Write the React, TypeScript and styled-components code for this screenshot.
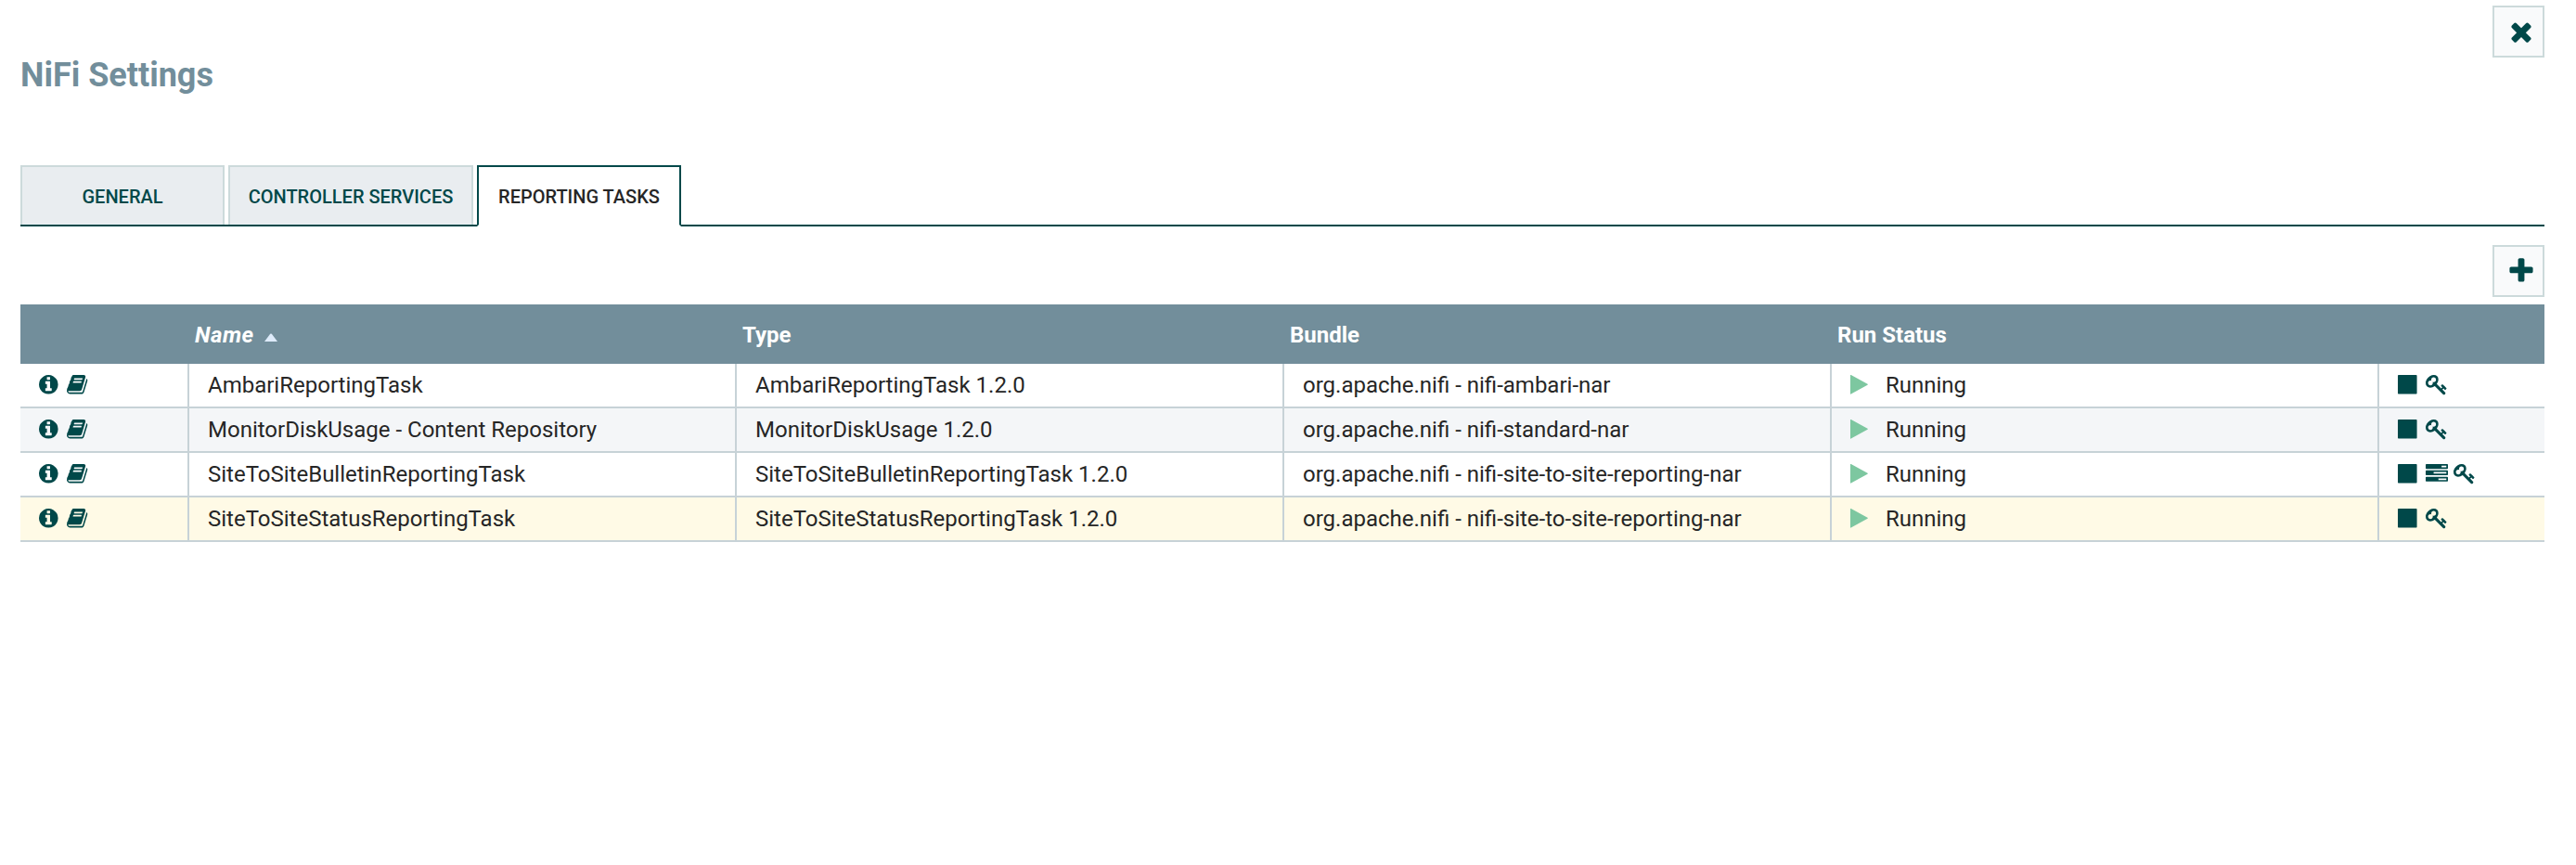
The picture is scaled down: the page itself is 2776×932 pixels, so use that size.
import React from "react";
import styled, { createGlobalStyle } from "styled-components";

const GlobalStyle = createGlobalStyle`
  body { margin: 0; background: #fff; font-family: Roboto, "Liberation Sans", sans-serif; color: #262626; }
  * { box-sizing: border-box; }
`;

const TEAL = "#004849";
const columns = "182px repeat(4, 590px) 178px";

const Page = styled.main`
  height: 932px;
  padding: 6px 34px 0 22px;
  display: flex;
  flex-direction: column;
`;

const TopBar = styled.header`
  display: flex;
  justify-content: space-between;
  height: 172px;
`;

const Title = styled.h1`
  margin: 53px 0 0;
  font-size: 36px;
  line-height: 44px;
  font-weight: 700;
  color: #728e9b;
`;

const IconButton = styled.button`
  width: 56px;
  height: 56px;
  padding: 0 0 0 5px;
  display: flex;
  align-items: center;
  justify-content: center;
  border: 2px solid #ccdadb;
  background: #f9fafb;
  color: ${TEAL};
`;

const Tabs = styled.nav`
  display: flex;
  gap: 4px;
  height: 66px;
  border-bottom: 2px solid ${TEAL};
`;

const Tab = styled.div<{ $width: number; $active?: boolean }>`
  width: ${(p) => p.$width}px;
  height: ${(p) => (p.$active ? 66 : 64)}px;
  padding-top: 20px;
  text-align: center;
  font-size: 20px;
  line-height: 24px;
  font-weight: 500;
  white-space: nowrap;
  border: 2px solid ${(p) => (p.$active ? TEAL : "#ccdadb")};
  border-bottom: ${(p) => (p.$active ? "2px solid #fff" : "0")};
  background: ${(p) => (p.$active ? "#fff" : "#e9edf0")};
  color: ${(p) => (p.$active ? "#262626" : TEAL)};
`;

const Actions = styled.div`
  display: flex;
  justify-content: flex-end;
  padding: 20px 0 8px;
`;

const HeaderRow = styled.div`
  display: grid;
  grid-template-columns: ${columns};
  height: 64px;
  background: #728e9b;
  color: #fff;
`;

const HeaderCell = styled.div<{ $sorted?: boolean }>`
  display: flex;
  align-items: center;
  gap: 11px;
  padding: 2px 0 0 6px;
  font-size: 24px;
  font-weight: 700;
  font-style: ${(p) => (p.$sorted ? "italic" : "normal")};
  letter-spacing: ${(p) => (p.$sorted ? "0.5px" : "normal")};
`;

const SortArrow = styled.svg`
  width: 14px;
  height: 9px;
  margin-top: 4px;
`;

const Row = styled.div<{ $tone: string }>`
  display: grid;
  grid-template-columns: ${columns};
  height: 48px;
  border-bottom: 2px solid #c7d2d7;
  background: ${(p) => p.$tone};
`;

const Cell = styled.div`
  padding-left: 20px;
  font-size: 24px;
  line-height: 46px;
  white-space: nowrap;
  &:not(:last-child) { border-right: 2px solid #c7d2d7; }
`;

const IconCell = styled(Cell)`
  display: flex;
  padding-top: 12px;
  line-height: 24px;
  color: ${TEAL};
`;

const StatusCell = styled(Cell)`
  display: flex;
`;

const IconSlot = styled.span<{ $width?: number }>`
  display: flex;
  width: ${(p) => p.$width ?? 30}px;
`;

const StatusIcon = styled(IconSlot)`
  padding-top: 12px;
  color: #7dc7a0;
`;

const Glyph = styled.svg`
  display: block;
  flex: none;
  fill: currentColor;
  overflow: visible;
`;

type Shape = { x: number; y?: number; d: string };

const shapes: Record<string, Shape> = {
  times: {
    x: 0, y: 0,
    d: "M1490 1322q0 40-28 68l-136 136q-28 28-68 28t-68-28l-294-294-294 294q-28 28-68 28t-68-28l-136-136q-28-28-28-68t28-68l294-294-294-294q-28-28-28-68t28-68l136-136q28-28 68-28t68 28l294 294 294-294q28-28 68-28t68 28l136 136q28 28 28 68t-28 68l-294 294 294 294q28 28 28 68z",
  },
  plus: {
    x: 0, y: 0,
    d: "M1600 736v192q0 40-28 68t-68 28h-416v416q0 40-28 68t-68 28h-192q-40 0-68-28t-28-68v-416h-416q-40 0-68-28t-28-68v-192q0-40 28-68t68-28h416v-416q0-40 28-68t68-28h192q40 0 68 28t28 68v416h416q40 0 68 28t28 68z",
  },
  info: {
    x: 128,
    d: "M1152 1376v-160q0-14-9-23t-23-9h-96v-512q0-14-9-23t-23-9h-320q-14 0-23 9t-9 23v160q0 14 9 23t23 9h96v320h-96q-14 0-23 9t-9 23v160q0 14 9 23t23 9h448q14 0 23-9t9-23zm-128-896v-160q0-14-9-23t-23-9h-192q-14 0-23 9t-9 23v160q0 14 9 23t23 9h192q14 0 23-9t9-23zm640 416q0 209-103 385.5t-279.5 279.5-385.5 103-385.5-103-279.5-279.5-103-385.5 103-385.5 279.5-279.5 385.5-103 385.5 103 279.5 279.5 103 385.5z",
  },
  book: {
    x: 64,
    d: "M1703 478q40 57 18 129l-275 906q-19 64-76.5 107.5t-122.5 43.5h-923q-77 0-148.5-53.5t-99.5-131.5q-24-67-2-127 0-4 3-27t4-37q1-8-3-21.5t-3-19.5q2-11 8-21t16.5-23.5 16.5-23.5q23-38 45-91.5t30-91.5q3-10 .5-30t-.5-28q3-11 17-28t17-23q21-36 42-92t25-90q1-9-2.5-32t.5-28q4-13 22-30.5t22-22.5q19-26 42.5-84.5t27.5-96.5q1-8-3-25.5t-2-26.5q2-8 9-18t18-23 17-21q8-12 16.5-30.5t15-35 16-36 19.5-32 26.5-23.5 36-11.5 47.5 5.5l-1 3q38-9 51-9h761q74 0 114 56t18 130l-274 906q-36 119-71.5 153.5t-128.5 34.5h-869q-27 0-38 15-11 16-1 43 24 70 144 70h923q29 0 56-15.5t35-41.5l300-987q7-22 5-57 38 15 59 43zm-1064 2q-4 13 2 22.5t20 9.5h608q13 0 25.5-9.5t16.5-22.5l21-64q4-13-2-22.5t-20-9.5h-608q-13 0-25.5 9.5t-16.5 22.5zm-83 256q-4 13 2 22.5t20 9.5h608q13 0 25.5-9.5t16.5-22.5l21-64q4-13-2-22.5t-20-9.5h-608q-13 0-25.5 9.5t-16.5 22.5z",
  },
  play: {
    x: 192,
    d: "M1576 927l-1328 738q-23 13-39.5 3t-16.5-36v-1472q0-26 16.5-36t39.5 3l1328 738q23 13 23 31t-23 31z",
  },
  stop: {
    x: 128,
    d: "M1664 192v1408q0 26-19 45t-45 19h-1408q-26 0-45-19t-19-45v-1408q0-26 19-45t45-19h1408q26 0 45 19t19 45z",
  },
  tasks: {
    x: 0,
    d: "M1024 1408h640v-128h-640v128zm-384-512h1024v-128h-1024v128zm640-512h384v-128h-384v128zm512 832v256q0 26-19 45t-45 19h-1664q-26 0-45-19t-19-45v-256q0-26 19-45t45-19h1664q26 0 45 19t19 45zm0-512v256q0 26-19 45t-45 19h-1664q-26 0-45-19t-19-45v-256q0-26 19-45t45-19h1664q26 0 45 19t19 45zm0-512v256q0 26-19 45t-45 19h-1664q-26 0-45-19t-19-45v-256q0-26 19-45t45-19h1664q26 0 45 19t19 45z",
  },
  key: {
    x: 0,
    d: "M832 512q0-80-56-136t-136-56-136 56-56 136q0 42 19 83-41-19-83-19-80 0-136 56t-56 136 56 136 136 56 136-56 56-136q0-42-19-83 41 19 83 19 80 0 136-56t56-136zm851 704q0 17-49 66t-66 49q-9 0-28.5-16t-36.5-33-38.5-40-24.5-26l-96 96 220 220q28 28 28 68 0 42-39 81t-81 39q-40 0-68-28l-671-671q-176 131-365 131-163 0-265.5-102.5t-102.5-265.5q0-160 95-313t248-248 313-95q163 0 265.5 102.5t102.5 265.5q0 189-131 365l355 355 96-96q-3-3-26-24.5t-40-38.5-33-36.5-16-28.5q0-17 49-66t66-49q13 0 23 10 6 6 46 44.5t82 79.5 86.5 86 73 78 28.5 41z",
  },
};

function Icon({ name, size = 24 }: { name: string; size?: number }) {
  const s = shapes[name];
  return (
    <Glyph width={size} height={size} viewBox={`${s.x} ${s.y ?? 128} 1792 1792`}>
      <path d={s.d} />
    </Glyph>
  );
}

const tasks = [
  { name: "AmbariReportingTask", type: "AmbariReportingTask 1.2.0", bundle: "org.apache.nifi - nifi-ambari-nar", tone: "#fff", actions: ["stop", "key"] },
  { name: "MonitorDiskUsage - Content Repository", type: "MonitorDiskUsage 1.2.0", bundle: "org.apache.nifi - nifi-standard-nar", tone: "#f4f6f8", actions: ["stop", "key"] },
  { name: "SiteToSiteBulletinReportingTask", type: "SiteToSiteBulletinReportingTask 1.2.0", bundle: "org.apache.nifi - nifi-site-to-site-reporting-nar", tone: "#fff", actions: ["stop", "tasks", "key"] },
  { name: "SiteToSiteStatusReportingTask", type: "SiteToSiteStatusReportingTask 1.2.0", bundle: "org.apache.nifi - nifi-site-to-site-reporting-nar", tone: "#fffae6", actions: ["stop", "key"] },
];

export default function App() {
  return (
    <Page>
      <GlobalStyle />
      <TopBar>
        <Title>NiFi Settings</Title>
        <IconButton aria-label="Close"><Icon name="times" size={32} /></IconButton>
      </TopBar>
      <Tabs>
        <Tab $width={220}>GENERAL</Tab>
        <Tab $width={264}>CONTROLLER SERVICES</Tab>
        <Tab $width={220} $active>REPORTING TASKS</Tab>
      </Tabs>
      <Actions>
        <IconButton aria-label="Add"><Icon name="plus" size={32} /></IconButton>
      </Actions>
      <HeaderRow>
        <HeaderCell />
        <HeaderCell $sorted>
          Name
          <SortArrow viewBox="0 0 14 9"><path d="M0 9L6.2 .8Q7 0 7.8 .8L14 9z" fill="#deebfa" /></SortArrow>
        </HeaderCell>
        <HeaderCell>Type</HeaderCell>
        <HeaderCell>Bundle</HeaderCell>
        <HeaderCell>Run Status</HeaderCell>
        <HeaderCell />
      </HeaderRow>
      {tasks.map((t) => (
        <Row key={t.name} $tone={t.tone}>
          <IconCell>
            <IconSlot><Icon name="info" /></IconSlot>
            <IconSlot><Icon name="book" /></IconSlot>
          </IconCell>
          <Cell>{t.name}</Cell>
          <Cell>{t.type}</Cell>
          <Cell>{t.bundle}</Cell>
          <StatusCell>
            <StatusIcon $width={38}><Icon name="play" /></StatusIcon>
            Running
          </StatusCell>
          <IconCell>
            {t.actions.map((a) => <IconSlot key={a}><Icon name={a} /></IconSlot>)}
          </IconCell>
        </Row>
      ))}
    </Page>
  );
}
